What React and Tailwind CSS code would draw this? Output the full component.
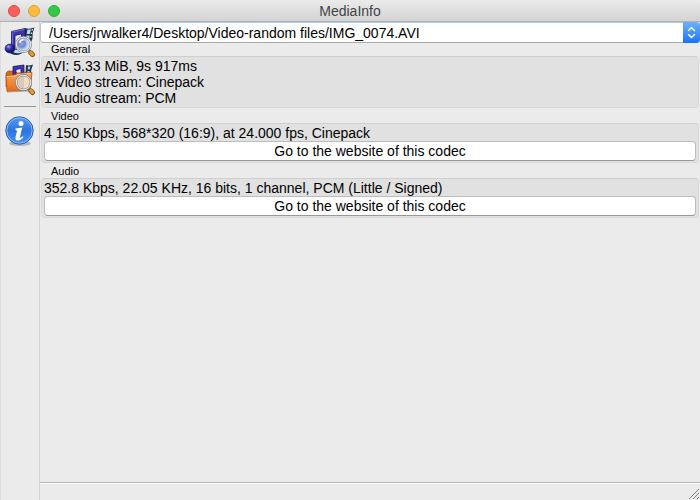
import React from 'react';

const file = '/Users/jrwalker4/Desktop/Video-random files/IMG_0074.AVI';

const sections = [
  {
    title: 'General',
    lines: ['AVI: 5.33 MiB, 9s 917ms', '1 Video stream: Cinepack', '1 Audio stream: PCM'],
  },
  {
    title: 'Video',
    lines: ['4 150 Kbps, 568*320 (16:9), at 24.000 fps, Cinepack'],
    codec: true,
  },
  {
    title: 'Audio',
    lines: ['352.8 Kbps, 22.05 KHz, 16 bits, 1 channel, PCM (Little / Signed)'],
    codec: true,
  },
];

function Magnifier({ fill }) {
  return (
    <g>
      <path d="M24.500 24l3 3" stroke="#66666b" strokeWidth="2.5" />
      <path d="M26.800 26.800l1.700 1.700" stroke="#8a5a1c" strokeWidth="5" strokeLinecap="round" />
      <path d="M26.800 26.600l1.600 1.600" stroke="#e0993a" strokeWidth="3.4" strokeLinecap="round" />
      <circle cx="19.500" cy="18.500" r="7.300" fill={fill} stroke="#7d838a" strokeWidth="2.2" />
      <circle cx="19.500" cy="18.500" r="7.200" fill="none" stroke="#e2e5e8" strokeWidth="1.1" />
    </g>
  );
}

function OpenFileIcon() {
  return (
    <svg viewBox="0 0 32 32" className="size-8" aria-hidden="true">
      <defs>
        <radialGradient id="lens" cx="38%" cy="45%">
          <stop offset="0" stopColor="#9aa6ea" />
          <stop offset="0.45" stopColor="#6f84d6" />
          <stop offset="0.75" stopColor="#b3c8ea" />
          <stop offset="1" stopColor="#d9e6f2" />
        </radialGradient>
        <radialGradient id="note" cx="35%" cy="30%">
          <stop offset="0" stopColor="#a7a1f5" />
          <stop offset="0.5" stopColor="#4a40bd" />
          <stop offset="1" stopColor="#1e1770" />
        </radialGradient>
      </defs>
      {/* film strip curling behind the note */}
      <path d="M21 2q4 1.500 9.500-0.500-2.500 5-2 11l-3 8-8 7q-5 3-11 0l2-5q5 2 8-3 4-7 4.500-17.500z" fill="#1d3448" />
      <path d="M23.500 3.500h3.500l-1.300 4.500h-3zM22.500 9.500h3v5h-4zM9 23q4 1.500 8 0l3 3q-6 2.500-11 0z" fill="#b9dcf2" />
      <path d="M28.500 3l-0.500 1.500M27.300 6.500v1.500M26.800 10v1.500" stroke="#e8f3fa" strokeWidth="1.2" />
      <path d="M7.500 5.500L21 2.500V20h-3.500V8L11 9.500V23H7.500z" fill="#3f37ae" stroke="#1b1468" strokeWidth="0.8" />
      <path d="M8 6.200l12.500-2.800M8.500 7v14" stroke="#7771d4" strokeWidth="0.9" />
      <ellipse cx="6" cy="22.500" rx="5" ry="4.500" fill="url(#note)" stroke="#1b1468" strokeWidth="0.6" />
      <Magnifier fill="url(#lens)" />
      <path d="M15.500 17q1-3 4-3.500" fill="none" stroke="#fff" strokeWidth="1.300" />
    </svg>
  );
}

function OpenFolderIcon() {
  return (
    <svg viewBox="0 0 32 32" className="size-8" aria-hidden="true">
      <defs>
        <linearGradient id="folder" x1="0" y1="0" x2="0" y2="1">
          <stop offset="0" stopColor="#fca65a" />
          <stop offset="1" stopColor="#ea6a12" />
        </linearGradient>
        <linearGradient id="folderLens" x1="0" y1="0" x2="1" y2="0">
          <stop offset="0.500" stopColor="#dcc8b8" />
          <stop offset="0.500" stopColor="#f3dbc3" />
        </linearGradient>
      </defs>
      <path d="M2 9l2-2h7l2 2h14v14H2z" fill="#d8681a" stroke="#a34a0f" strokeWidth="0.6" />
      <path d="M9 2.500L20 1v11h-3V4.500l-5 1V12H9z" fill="#3f37ae" stroke="#1b1468" strokeWidth="0.8" />
      <path d="M22 1q3 1 7-0.500-2.500 5-2 11h-6q1-5 1-10.500z" fill="#1d3448" />
      <path d="M24 2.500h2.500l-0.800 3h-2zM23.500 7h2v4h-2.500z" fill="#a9d0ea" />
      <path d="M2 11.500l9-0.500 2-1.500 15-1-2 17.500-23 1.500z" fill="url(#folder)" stroke="#b9500f" strokeWidth="0.8" />
      <path d="M3 12.500l8.500-0.500 2-1.500 13.500-1" fill="none" stroke="#ffc997" />
      <path d="M3 28l22-1" stroke="#999" strokeWidth="0.8" />
      <Magnifier fill="url(#folderLens)" />
    </svg>
  );
}

function InfoIcon() {
  return (
    <svg viewBox="0 0 32 32" className="size-8" aria-hidden="true">
      <defs>
        <linearGradient id="info" x1="0" y1="0" x2="0" y2="1">
          <stop offset="0" stopColor="#5a9df2" />
          <stop offset="0.5" stopColor="#2d74dd" />
          <stop offset="1" stopColor="#4394f8" />
        </linearGradient>
      </defs>
      <ellipse cx="16" cy="28.500" rx="11" ry="2.500" fill="#b5b5b5" />
      <circle cx="15.500" cy="15.500" r="13.700" fill="url(#info)" stroke="#2a5fae" />
      <circle cx="15.500" cy="15.500" r="12.600" fill="none" stroke="#8fb9f3" />
      <circle cx="17" cy="8.500" r="2.500" fill="#fff" />
      <path d="M11.500 13.500l6.800-1-2.300 9q-0.300 1.500 1 1l1.800-1.300 0.700 1q-3 3.500-6 3.200-2.700-0.400-1.900-3.500l1.500-6.200-1.600-0.700z" fill="#fff" />
    </svg>
  );
}

function Section({ title, lines, codec }) {
  return (
    <section className="mb-0.5">
      <h2 className="pl-2.5 text-[11px] leading-[13px]">{title}</h2>
      <div className="rounded border border-[#dadada] border-t-[#cfcfcf] bg-[#e1e1e1] px-0.5 py-px">
        {lines.map((line) => (
          <p key={line} className="text-sm leading-4">{line}</p>
        ))}
        {codec && (
          <button
            type="button"
            className="block h-5 w-full rounded border border-[#bdbdbd] border-b-[#999] bg-white text-sm leading-4"
          >
            Go to the website of this codec
          </button>
        )}
      </div>
    </section>
  );
}

export default function App() {
  return (
    <div className="flex min-h-screen flex-col bg-[#ebebeb] font-['Liberation_Sans',Arial,sans-serif] text-black">
      <header className="grid h-[22px] shrink-0 grid-cols-[1fr_auto_1fr] items-center rounded-t border-b border-[#b1b1b1] bg-linear-to-b from-[#ebebeb] to-[#d3d3d3]">
        <div className="flex gap-2 pl-2">
          <button type="button" aria-label="Close" className="size-3 rounded-full border border-[#e2463f] bg-[#fc605b]" />
          <button type="button" aria-label="Minimize" className="size-3 rounded-full border border-[#dfa032] bg-[#fdbc40]" />
          <button type="button" aria-label="Zoom" className="size-3 rounded-full border border-[#24ad35] bg-[#34c84a]" />
        </div>
        <h1 className="text-sm leading-4 text-[#444]">MediaInfo</h1>
      </header>

      <div className="flex grow">
        <nav aria-label="Toolbar" className="flex w-10 shrink-0 flex-col items-center border-x border-r-[#d2d2d2] border-l-[#dcdcdc] pt-1">
          <button type="button" aria-label="Open file"><OpenFileIcon /></button>
          <button type="button" aria-label="Open folder" className="mt-1.5"><OpenFolderIcon /></button>
          <hr className="mt-2.5 w-8 border-[#969696]" />
          <button type="button" aria-label="About" className="mt-2"><InfoIcon /></button>
        </nav>

        <div className="flex min-w-0 grow flex-col">
          <main className="grow">
            <div className="relative">
              <select
                aria-label="File"
                className="block h-[21px] w-full appearance-none rounded border border-[#c4c4c4] border-t-[#a9cdf5] border-b-[#aaa] bg-white pr-5 pl-2 text-sm leading-4"
              >
                <option>{file}</option>
              </select>
              <span className="pointer-events-none absolute inset-y-0 right-0 flex w-[17px] items-center justify-center rounded-r bg-linear-to-b from-[#6bb1fa] to-[#1672fb]">
                <svg viewBox="0 0 9 13" className="h-[13px] w-[9px]" fill="none" stroke="#fff" strokeWidth="1.5" strokeLinecap="round" strokeLinejoin="round" aria-hidden="true">
                  <path d="M1.500 4.500l3-3 3 3M1.500 8.500l3 3 3-3" />
                </svg>
              </span>
            </div>
            <div className="px-px">
              {sections.map((s) => (
                <Section key={s.title} {...s} />
              ))}
            </div>
          </main>

          <footer className="flex h-[18px] items-end justify-end border-t border-[#b4b4b4] shadow-[inset_0_1px_0_#fff]">
            <svg viewBox="0 0 12 12" className="size-3" stroke="#828282" strokeWidth="1" aria-hidden="true">
              <path d="M1 11L11 1M5 11l6-6M9 11l2-2" />
            </svg>
          </footer>
        </div>
      </div>
    </div>
  );
}
